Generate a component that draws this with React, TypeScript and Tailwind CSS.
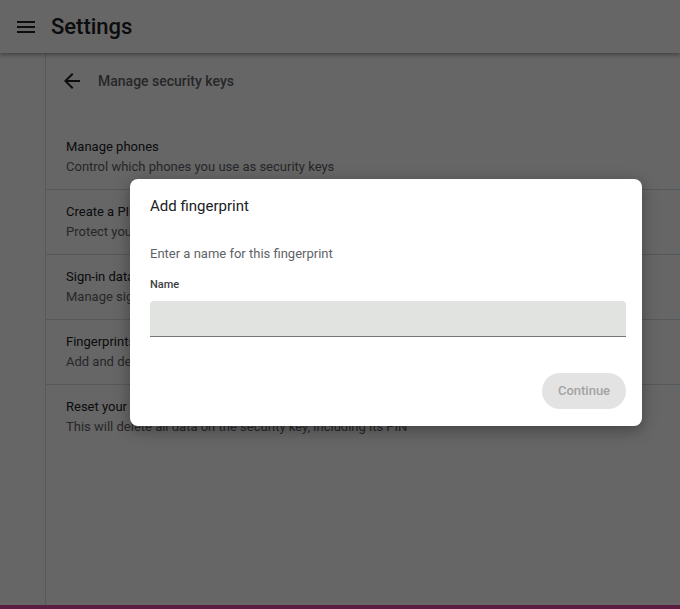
import React from "react";

const items = [
  { t: "Manage phones", s: "Control which phones you use as security keys" },
  { t: "Create a PIN", s: "Protect your security key with a PIN" },
  { t: "Sign-in data", s: "Manage sign-in data stored on your security key" },
  { t: "Fingerprints", s: "Add and delete fingerprints saved on your security key" },
  { t: "Reset your security key", s: "This will delete all data on the security key, including its PIN" },
];

export default function App() {
  return (
    <div
      className="relative w-[680px] h-[609px] flex flex-col bg-white overflow-hidden"
      style={{ fontFamily: "Roboto, 'Liberation Sans', sans-serif" }}
    >
      <header className="relative z-10 h-[53px] flex items-center bg-white shadow-[0_2px_4px_rgba(0,0,0,0.35)] shrink-0">
        <svg className="ml-[14px]" width="24" height="24" viewBox="0 0 24 24" fill="#202124">
          <path d="M3 18h18v-2H3v2zm0-5h18v-2H3v2zm0-7v2h18V6H3z" />
        </svg>
        <span className="ml-[13px] text-[22px] font-medium text-[#202124] leading-none">Settings</span>
      </header>
      <div className="flex flex-1 min-h-0">
        <aside className="w-[46px] border-r border-[#dadce0] shrink-0" />
        <main className="flex-1 flex flex-col">
          <div className="h-[56px] flex items-center pl-[14px]">
            <svg width="24" height="24" viewBox="0 0 24 24" fill="#202124">
              <path d="M20 11H7.83l5.59-5.59L12 4l-8 8 8 8 1.41-1.41L7.83 13H20v-2z" />
            </svg>
            <span className="ml-[14px] text-[14px] font-medium text-[#5f6368]">Manage security keys</span>
          </div>
          <div className="mt-[16px]">
            {items.map((it, i) => (
              <div
                key={i}
                className={`pl-[20px] pt-[12px] pb-[12px] text-[13px] leading-[20px] ${i < items.length - 1 ? "border-b border-[#dadce0]" : ""}`}
              >
                <div className="text-[#202124]">{it.t}</div>
                <div className="text-[#5f6368]">{it.s}</div>
              </div>
            ))}
          </div>
        </main>
      </div>
      <div className="h-[4px] bg-[#e04aa4] shrink-0" />

      <div className="absolute inset-0 z-20 bg-black/60" />

      <div className="absolute z-30 left-[130px] top-[179px] w-[512px] bg-white rounded-[8px] shadow-[0_4px_16px_rgba(0,0,0,0.35)] pl-[20px] pr-[16px] pt-[17px] pb-[17px] flex flex-col">
        <div className="text-[15px] leading-[20px] text-[#202124]">Add fingerprint</div>
        <div className="mt-[28px] text-[13px] leading-[20px] text-[#5f6368]">
          Enter a name for this fingerprint
        </div>
        <div className="mt-[13px] text-[11px] leading-[15px] font-medium text-[#3c4043]">Name</div>
        <div className="mt-[9px] h-[36px] bg-[#e1e3e1] rounded-t-[4px] border-b border-[#757575]" />
        <div className="mt-[36px] flex justify-end">
          <button className="h-[36px] w-[84px] rounded-full bg-[#e3e3e3] text-[13px] font-medium text-[#a3a3a3]">
            Continue
          </button>
        </div>
      </div>
    </div>
  );
}
